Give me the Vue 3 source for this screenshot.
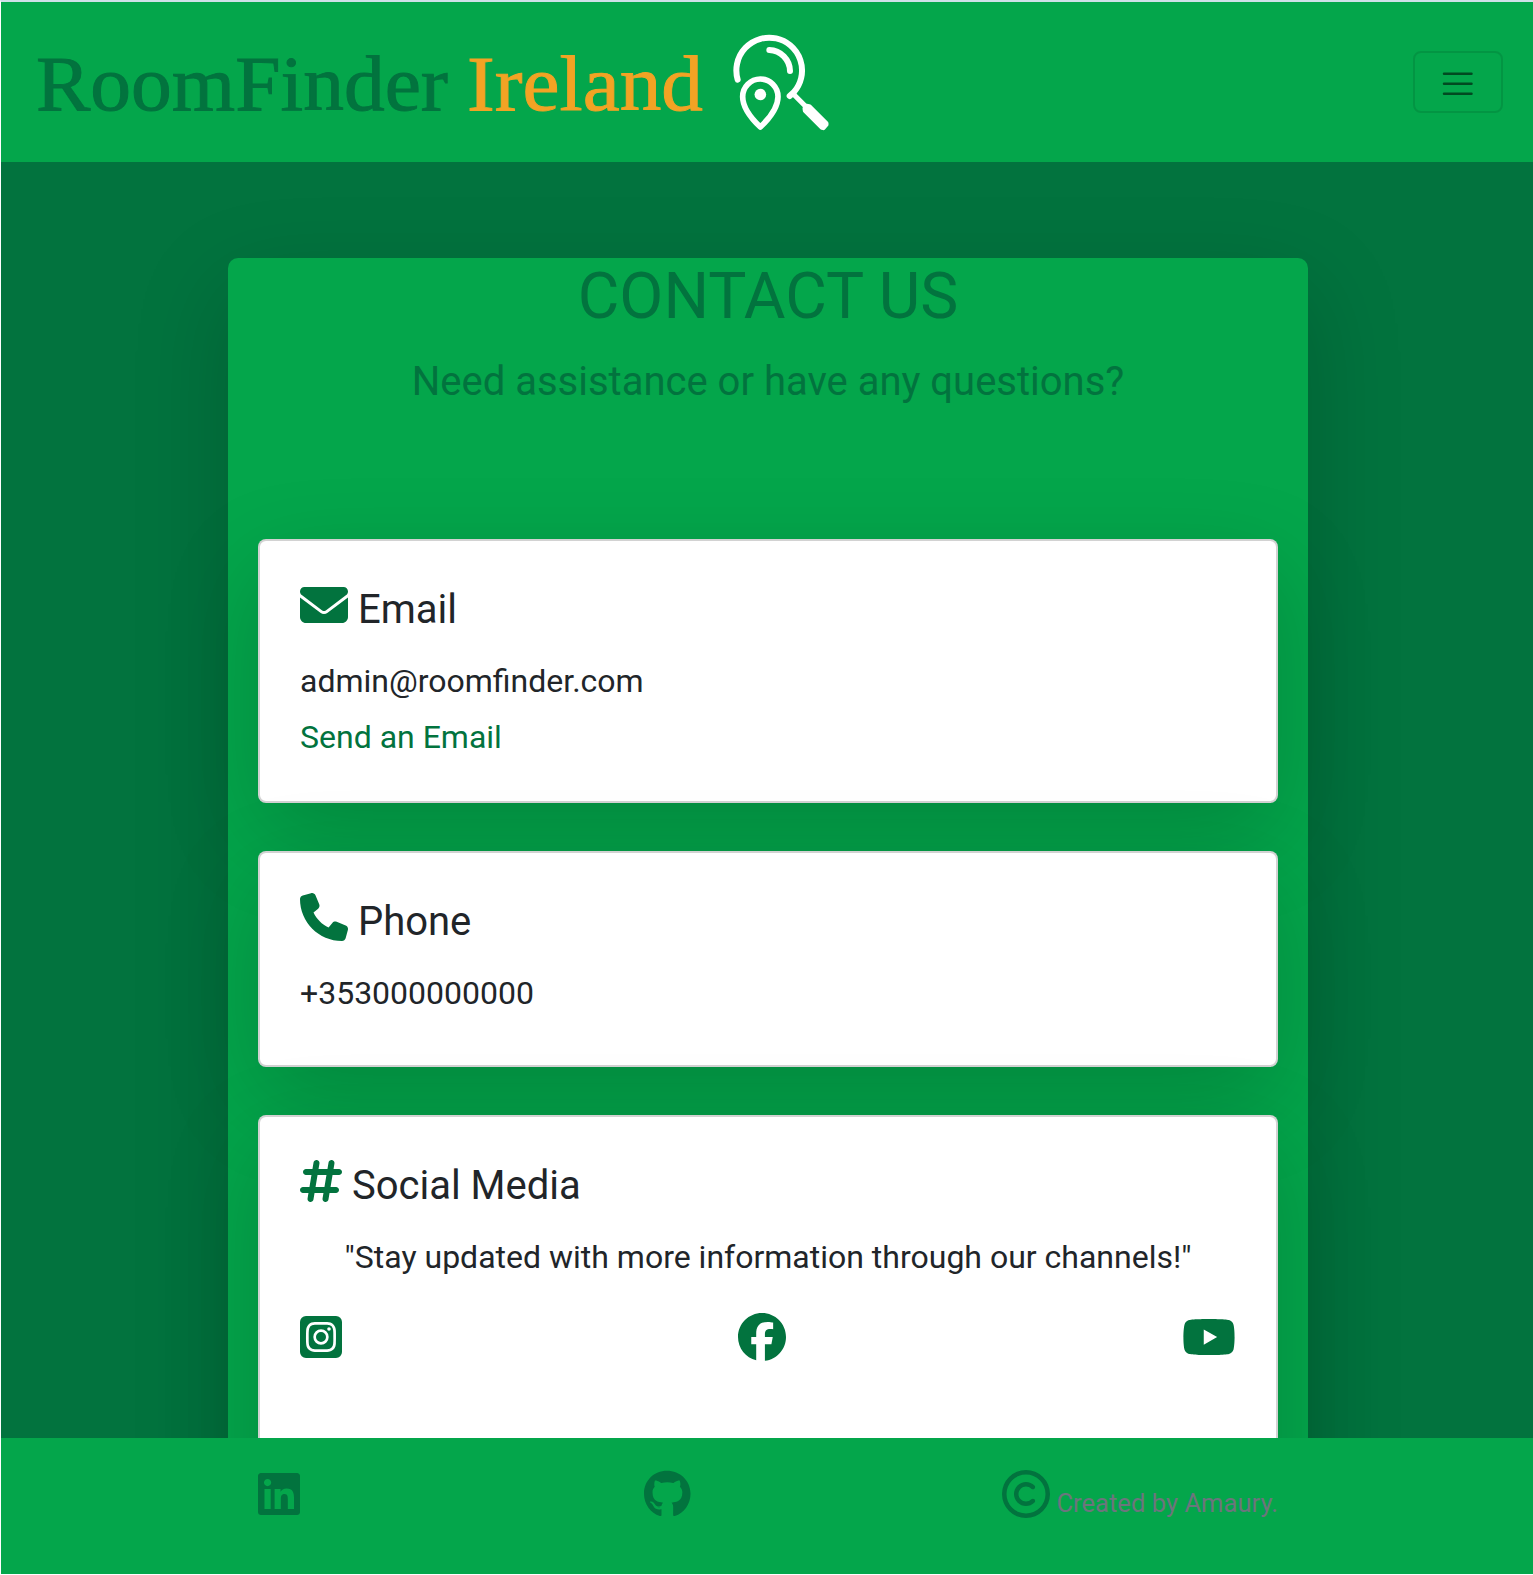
<script setup>
const icons = {
  envelope: { w: 512, d: 'M48 64C21.5 64 0 85.500 0 112c0 15.100 7.100 29.300 19.200 38.400L236.800 313.600c11.400 8.500 27 8.500 38.400 0L492.800 150.400c12.100-9.100 19.200-23.300 19.200-38.400c0-26.500-21.500-48-48-48H48zM0 176V384c0 35.300 28.700 64 64 64H448c35.300 0 64-28.700 64-64V176L294.400 339.200c-22.800 17.100-54 17.100-76.800 0L0 176z' },
  phone: { w: 512, d: 'M164.900 24.600c-7.700-18.600-28-28.500-47.400-23.200l-88 24C12.100 30.200 0 46 0 64C0 311.400 200.600 512 448 512c18 0 33.800-12.100 38.600-29.500l24-88c5.300-19.400-4.600-39.700-23.200-47.400l-96-40c-16.300-6.800-35.200-2.100-46.300 11.600L304.700 368C234.300 334.700 177.300 277.700 144 207.300L193.300 167c13.700-11.200 18.400-30 11.600-46.300l-40-96z' },
  hashtag: { w: 448, d: 'M181.300 32.400c17.400 2.900 29.200 19.400 26.300 36.800L197.800 128h95.100l11.500-69.300c2.900-17.400 19.400-29.200 36.800-26.300s29.200 19.400 26.300 36.800L357.800 128H416c17.700 0 32 14.300 32 32s-14.300 32-32 32H347.100L325.800 320H384c17.700 0 32 14.300 32 32s-14.300 32-32 32H315.100l-11.500 69.300c-2.900 17.400-19.400 29.200-36.800 26.300s-29.200-19.400-26.300-36.800l9.800-58.700H155.100l-11.500 69.300c-2.900 17.400-19.400 29.200-36.800 26.300s-29.200-19.400-26.300-36.800L90.200 384H32c-17.700 0-32-14.300-32-32s14.300-32 32-32h68.900l21.300-128H64c-17.700 0-32-14.300-32-32s14.300-32 32-32h68.900l11.500-69.300c2.900-17.400 19.400-29.200 36.800-26.300zM187.100 192L165.800 320h95.100l21.300-128H187.100z' },
  instagram: { w: 448, d: 'M224 202.660A53.340 53.340 0 1 0 277.360 256 53.380 53.380 0 0 0 224 202.660Zm124.710-41a54 54 0 0 0-30.410-30.410c-21-8.290-71-6.430-94.300-6.430s-73.250-1.930-94.310 6.430a54 54 0 0 0-30.410 30.410c-8.280 21-6.430 71.050-6.430 94.330S91 329.260 99.320 350.330a54 54 0 0 0 30.410 30.410c21 8.290 71 6.430 94.310 6.430s73.240 1.930 94.300-6.430a54 54 0 0 0 30.410-30.410c8.350-21 6.430-71.050 6.430-94.330S357.100 182.740 348.750 161.670ZM224 338a82 82 0 1 1 82-82A81.900 81.900 0 0 1 224 338Zm85.380-148.300a19.140 19.140 0 1 1 19.130-19.140A19.100 19.100 0 0 1 309.420 189.740ZM384 32H64A64 64 0 0 0 0 96V416a64 64 0 0 0 64 64H384a64 64 0 0 0 64-64V96A64 64 0 0 0 384 32ZM382.880 322c-1.290 25.630-7.140 48.340-25.850 67s-41.400 24.630-67 25.850c-26.410 1.490-105.590 1.490-132 0-25.630-1.290-48.260-7.150-67-25.850s-24.630-41.420-25.850-67c-1.490-26.420-1.490-105.610 0-132 1.290-25.630 7.070-48.340 25.850-67s41.470-24.560 67-25.780c26.410-1.490 105.590-1.490 132 0 25.630 1.290 48.330 7.150 67 25.850s24.630 41.420 25.850 67.050C384.370 216.440 384.370 295.560 382.880 322Z' },
  facebook: { w: 512, d: 'M512 256C512 114.600 397.400 0 256 0S0 114.600 0 256C0 376 82.700 476.800 194.200 504.500V334.200H141.400V256h52.800V222.300c0-87.100 39.400-127.500 125-127.500c16.200 0 44.200 3.200 55.700 6.400V172c-6-.6-16.500-1-29.600-1c-42 0-58.200 15.900-58.200 57.200V256h83.600l-14.400 78.200H287V510.100C413.800 494.800 512 386.900 512 256z' },
  youtube: { w: 576, d: 'M549.655 124.083c-6.281-23.650-24.787-42.276-48.284-48.597C458.781 64 288 64 288 64S117.220 64 74.629 75.486c-23.497 6.322-42.003 24.947-48.284 48.597-11.412 42.867-11.412 132.305-11.412 132.305s0 89.438 11.412 132.305c6.281 23.650 24.787 41.500 48.284 47.821C117.220 448 288 448 288 448s170.780 0 213.371-11.486c23.497-6.321 42.003-24.171 48.284-47.821 11.412-42.867 11.412-132.305 11.412-132.305s0-89.438-11.412-132.305zm-317.510 213.508V175.185l142.739 81.205-142.739 81.201z' },
  linkedin: { w: 448, d: 'M416 32H31.900C14.300 32 0 46.500 0 64.300v383.400C0 465.500 14.300 480 31.900 480H416c17.600 0 32-14.500 32-32.300V64.300c0-17.800-14.400-32.300-32-32.300zM135.400 416H69V202.200h66.500V416zm-33.200-243c-21.300 0-38.500-17.300-38.500-38.500S80.900 96 102.200 96c21.200 0 38.500 17.300 38.500 38.500 0 21.300-17.200 38.500-38.500 38.500zm282.100 243h-66.400V312c0-24.800-.5-56.700-34.500-56.700-34.600 0-39.900 27-39.900 54.900V416h-66.400V202.200h63.700v29.200h.9c8.900-16.800 30.600-34.500 62.900-34.500 67.200 0 79.700 44.300 79.700 101.900V416z' },
  github: { w: 496, d: 'M165.900 397.400c0 2-2.300 3.600-5.200 3.600-3.300.3-5.600-1.300-5.600-3.600 0-2 2.300-3.600 5.200-3.600 3-.3 5.600 1.300 5.600 3.600zM244.800 8C106.100 8 0 113.300 0 252c0 110.900 69.800 205.800 169.500 239.200 12.800 2.300 17.300-5.600 17.300-12.100 0-6.200-.3-40.400-.3-61.400 0 0-70 15-84.700-29.800 0 0-11.400-29.100-27.800-36.600 0 0-22.900-15.700 1.600-15.400 0 0 24.900 2 38.600 25.800 21.900 38.600 58.600 27.500 72.900 20.900 2.300-16 8.800-27.100 16-33.700-55.900-6.200-112.300-14.300-112.300-110.500 0-27.500 7.600-41.300 23.600-58.900-2.600-6.500-11.100-33.300 2.600-67.900 20.900-6.500 69 27 69 27 20-5.600 41.500-8.500 62.800-8.500s42.800 2.900 62.800 8.500c0 0 48.100-33.600 69-27 13.700 34.700 5.200 61.400 2.600 67.900 16 17.700 25.800 31.500 25.800 58.900 0 96.500-58.900 104.200-114.800 110.500 9.200 7.900 17 22.900 17 46.400 0 33.700-.3 75.400-.3 83.600 0 6.500 4.600 14.400 17.300 12.100C428.200 457.800 496 362.900 496 252 496 113.300 383.500 8 244.800 8z' },
  copyright: { w: 512, d: 'M256 48a208 208 0 1 1 0 416 208 208 0 1 1 0-416zm0 464A256 256 0 1 0 256 0a256 256 0 1 0 0 512zM199.400 312.600c-31.200-31.200-31.200-81.900 0-113.100s81.900-31.200 113.100 0c9.400 9.400 24.600 9.400 33.900 0s9.400-24.600 0-33.900c-50-50-131-50-181 0s-50 131 0 181s131 50 181 0c9.400-9.400 9.400-24.600 0-33.900s-24.600-9.400-33.900 0c-31.200 31.200-81.900 31.200-113.100 0z' },
}
const size = (name) => (icons[name].w * 48) / 512
const box = (name) => `0 0 ${icons[name].w} 512`
const channels = ['instagram', 'facebook', 'youtube']
</script>

<template>
  <div class="page">
    <header class="navbar">
      <a class="brand">
        <svg class="wordmark" width="670" height="80" viewBox="0 0 670 80">
          <text class="word room" x="-1" y="68" textLength="412" lengthAdjust="spacingAndGlyphs">RoomFinder</text>
          <text class="word ireland" x="430" y="68" textLength="236" lengthAdjust="spacingAndGlyphs">Ireland</text>
        </svg>
        <svg class="lens" width="97" height="98" viewBox="877 100 291 294">
          <g fill="none" stroke="#fff" stroke-linecap="round">
            <path stroke-width="18" d="M891 237A98.500 98.500 0 1 1 1060 274L1047 286" stroke-linejoin="round" />
            <path stroke-width="18" d="M986 148A64 64 0 0 1 1048 211" />
            <path stroke-width="17" stroke-linejoin="round" d="M959 379C939 360 906 322 906 288A53 53 0 0 1 1012 288C1012 322 979 360 959 379Z" />
            <path stroke-width="15" d="M1058 280L1096 318" />
            <path stroke-width="13" stroke-linejoin="round" fill="#fff" d="M1092 323L1098 316L1106 317L1157 368L1157 372L1148 382L1144 381L1093 330Z" />
          </g>
          <circle cx="959" cy="281.500" r="17.500" fill="#fff" />
        </svg>
      </a>
      <button class="toggler" aria-label="Toggle navigation">
        <svg width="37.500" height="37.500" viewBox="0 0 30 30">
          <path d="M4 7h22M4 15h22M4 23h22" fill="none" stroke="rgba(0,0,0,.55)" stroke-width="2" stroke-linecap="round" />
        </svg>
      </button>
    </header>

    <main class="content">
      <section class="panel">
        <h1>CONTACT US</h1>
        <p class="lead">Need assistance or have any questions?</p>
        <div class="cards">
          <article class="card">
            <h2><svg class="icon" :width="size('envelope')" height="48" :viewBox="box('envelope')"><path :d="icons.envelope.d" /></svg> Email</h2>
            <p>admin@roomfinder.com</p>
            <a class="link">Send an Email</a>
          </article>
          <article class="card">
            <h2><svg class="icon" :width="size('phone')" height="48" :viewBox="box('phone')"><path :d="icons.phone.d" /></svg> Phone</h2>
            <p>+353000000000</p>
          </article>
          <article class="card social">
            <h2><svg class="icon" :width="size('hashtag')" height="48" :viewBox="box('hashtag')"><path :d="icons.hashtag.d" /></svg> Social Media</h2>
            <p class="centered">"Stay updated with more information through our channels!"</p>
            <div class="channels">
              <svg v-for="c in channels" :key="c" class="icon" :width="size(c)" height="48" :viewBox="box(c)"><path :d="icons[c].d" /></svg>
            </div>
          </article>
        </div>
      </section>
    </main>

    <footer class="footer">
      <div class="footer-row">
        <svg class="icon" :width="size('linkedin')" height="48" :viewBox="box('linkedin')"><path :d="icons.linkedin.d" /></svg>
        <svg class="icon github" :width="size('github')" height="48" :viewBox="box('github')"><path :d="icons.github.d" /></svg>
        <div class="credit">
          <svg class="icon" :width="size('copyright')" height="48" :viewBox="box('copyright')"><path :d="icons.copyright.d" /></svg>
          <span>Created by Amaury.</span>
        </div>
      </div>
    </footer>
  </div>
</template>

<style>
body {
  margin: 0;
  background: #fff;
}
</style>

<style scoped>
* {
  box-sizing: border-box;
}
.page {
  display: flex;
  flex-direction: column;
  width: 1533px;
  height: 1575px;
  border: solid #fff;
  border-width: 2px 0 1px 1px;
  border-top-color: #cfe0e8;
  overflow: hidden;
  background: #02733e;
  color: #212529;
  font: 32px/48px Roboto, sans-serif;
}
.navbar {
  flex: none;
  display: flex;
  align-items: center;
  justify-content: space-between;
  height: 160px;
  padding: 0 30px 0 36px;
  background: #04a64b;
}
.brand {
  display: flex;
  align-items: center;
}
.wordmark {
  overflow: visible;
}
.word {
  font-family: "Liberation Serif", serif;
  font-size: 78px;
  stroke-width: 0.9px;
}
.room {
  fill: #02733e;
  stroke: #02733e;
}
.ireland {
  fill: #f2a324;
  stroke: #f2a324;
}
.lens {
  margin: 1px 0 0 26px;
}
.toggler {
  display: flex;
  align-items: center;
  justify-content: center;
  width: 90px;
  height: 62px;
  padding: 3px 0 0;
  border: 2px solid rgba(0, 0, 0, 0.1);
  border-radius: 8px;
  background: transparent;
}
.content {
  flex: 1;
  min-height: 0;
  overflow: hidden;
  padding: 96px 225px 0 227px;
}
.panel {
  width: 1080px;
  height: 1500px;
  padding: 0 30px;
  border-radius: 10px;
  background: #04a64b;
  box-shadow: 0 32px 96px rgba(0, 0, 0, 0.175);
}
h1,
h2,
p {
  margin: 0;
  font-weight: 400;
}
h1 {
  font-size: 64px;
  line-height: 77px;
  margin-bottom: 17px;
  text-align: center;
  color: #02733e;
}
.lead {
  font-size: 40px;
  line-height: 60px;
  text-align: center;
  color: #02733e;
}
.cards {
  display: flex;
  flex-direction: column;
  gap: 48px;
  margin-top: 127px;
}
.card {
  height: 216px;
  padding: 40px;
  border: 2px solid rgba(0, 0, 0, 0.175);
  border-radius: 8px;
  background: #fff;
  background-clip: border-box;
  box-shadow: 0 32px 96px rgba(0, 0, 0, 0.175);
}
.card:first-child {
  height: 264px;
}
.social {
  height: 420px;
}
h2 {
  height: 52px;
  margin-bottom: 24px;
  font-size: 40px;
  line-height: 48px;
}
.card p {
  margin-bottom: 8px;
}
.centered {
  text-align: center;
}
.icon {
  fill: #02733e;
  vertical-align: -6px;
}
.link {
  display: block;
  color: #02733e;
}
.channels {
  display: flex;
  justify-content: space-between;
  margin-top: 32px;
}
.footer {
  flex: none;
  height: 136px;
  padding: 32px 255px 0 257px;
  background: #04a64b;
}
.footer-row {
  display: flex;
}
.github {
  margin-left: 344px;
}
.credit {
  display: flex;
  align-items: flex-start;
  gap: 6px;
  margin-left: auto;
  font-size: 25.600px;
  line-height: 38px;
  color: #6c757d;
}
.credit span {
  margin-top: 14px;
}
</style>
